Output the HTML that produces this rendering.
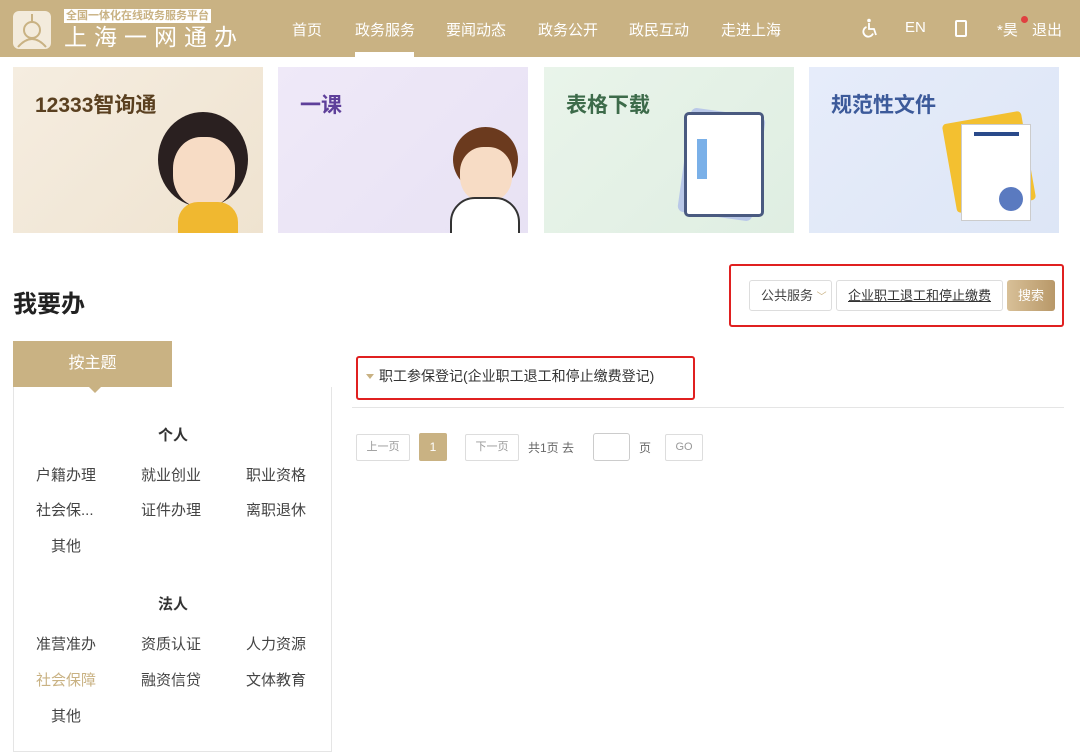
<!DOCTYPE html>
<html><head><meta charset="utf-8"><style>
*{margin:0;padding:0;box-sizing:border-box}
body{width:1080px;height:753px;overflow:hidden;background:#fff;font-family:"Liberation Sans","Noto Sans CJK SC",sans-serif;color:#333;position:relative}
.hd{position:absolute;left:0;top:0;width:1080px;height:57px;background:#c9b283}
.abs{position:absolute}
.nav{color:#fff;font-size:15px;top:19px}
.card{position:absolute;top:67px;width:250px;height:166px;overflow:hidden}
.card b{position:absolute;left:22px;top:22px;font-size:21px;font-weight:bold}
.side a{position:absolute;font-size:15px;color:#444}
</style></head><body>
<div class="hd">
 <div class="abs" style="left:13px;top:11px;width:38px;height:38px;background:#f3ebdc;border-radius:6px"></div>
 <svg class="abs" style="left:13px;top:11px" width="38" height="38"><circle cx="19" cy="19" r="8" fill="none" stroke="#c9b283" stroke-width="2"/><line x1="19" y1="3" x2="19" y2="11" stroke="#c9b283" stroke-width="2"/><path d="M5 36 Q19 20 33 36" fill="none" stroke="#c9b283" stroke-width="2"/></svg>
 <div class="abs" style="left:64px;top:9px;background:#fff;color:#c9b283;font-size:11px;font-weight:bold;padding:0 2px;line-height:14px">全国一体化在线政务服务平台</div>
 <div class="abs" style="left:64px;top:23px;color:#fff;font-size:23px;letter-spacing:7px;line-height:28px">上海一网通办</div>
 <div class="abs nav" style="left:292px">首页</div>
 <div class="abs nav" style="left:355px">政务服务</div>
 <div class="abs" style="left:355px;top:52px;width:59px;height:5px;background:#fff"></div>
 <div class="abs nav" style="left:446px">要闻动态</div>
 <div class="abs nav" style="left:538px">政务公开</div>
 <div class="abs nav" style="left:629px">政民互动</div>
 <div class="abs nav" style="left:721px">走进上海</div>
 <svg class="abs" style="left:862px;top:18px" width="16" height="20" viewBox="0 0 16 20"><circle cx="7" cy="2.5" r="1.8" fill="#fff"/><path d="M7 5 V11 H12 L14 17" fill="none" stroke="#fff" stroke-width="1.8"/><path d="M4.5 9 A5 5 0 1 0 11 15.5" fill="none" stroke="#fff" stroke-width="1.8"/></svg>
 <div class="abs nav" style="left:905px">EN</div>
 <div class="abs" style="left:955px;top:20px;width:12px;height:17px;border:2px solid #fff;border-radius:2px"></div>
 <div class="abs nav" style="left:997px">*昊</div>
 <div class="abs" style="left:1021px;top:16px;width:7px;height:7px;border-radius:50%;background:#e04040"></div>
 <div class="abs nav" style="left:1032px">退出</div>
</div>
<div class="card" style="left:13px;background:linear-gradient(135deg,#f5ede0,#efe3d0)"><b style="color:#5a4020">12333智询通</b>
 <div class="abs" style="left:145px;top:45px;width:90px;height:95px;border-radius:50%;background:#2a2020"></div>
 <div class="abs" style="left:160px;top:70px;width:62px;height:70px;border-radius:45%;background:#f7dcc5"></div>
 <div class="abs" style="left:165px;top:135px;width:60px;height:40px;border-radius:20px 20px 0 0;background:#f0b830"></div></div>
<div class="card" style="left:278px;background:linear-gradient(135deg,#efe9f8,#e8e2f4)"><b style="color:#5e3f9a">一课</b>
 <div class="abs" style="left:175px;top:60px;width:65px;height:65px;border-radius:50%;background:#6b3a1e"></div>
 <div class="abs" style="left:182px;top:80px;width:52px;height:55px;border-radius:45%;background:#f7dcc5"></div>
 <div class="abs" style="left:172px;top:130px;width:70px;height:40px;border-radius:25px 25px 0 0;background:#fff;border:2px solid #333"></div></div>
<div class="card" style="left:544px;background:linear-gradient(135deg,#e9f4ea,#dfeee2)"><b style="color:#3d6b4a">表格下载</b>
 <div class="abs" style="left:140px;top:45px;width:75px;height:105px;background:#b9c8e8;transform:rotate(8deg);border-radius:6px"></div>
 <div class="abs" style="left:140px;top:45px;width:80px;height:105px;background:#fff;border:3px solid #4a5a80;border-radius:5px"></div>
 <div class="abs" style="left:153px;top:72px;width:10px;height:40px;background:#7ab0e8"></div></div>
<div class="card" style="left:809px;background:linear-gradient(135deg,#e6ecfa,#dde6f6)"><b style="color:#3c5a9a">规范性文件</b>
 <div class="abs" style="left:140px;top:50px;width:80px;height:90px;background:#f3c030;transform:rotate(-10deg);border-radius:4px"></div>
 <div class="abs" style="left:152px;top:57px;width:70px;height:97px;background:#fff;border:1px solid #ccc"></div>
 <div class="abs" style="left:165px;top:65px;width:45px;height:4px;background:#2a4a8a"></div>
 <div class="abs" style="left:190px;top:120px;width:24px;height:24px;border-radius:50%;background:#5a7ac0"></div></div>

<div class="abs" style="left:13px;top:284px;font-size:24px;font-weight:bold;color:#222">我要办</div>
<div class="abs" style="left:729px;top:264px;width:335px;height:63px;border:2px solid #e02020;border-radius:3px"></div>
<div class="abs" style="left:749px;top:280px;width:83px;height:31px;border:1px solid #ddd;border-radius:3px;font-size:13px;line-height:29px;padding-left:11px;color:#444">公共服务 <span style="color:#c9b283;font-size:10px">﹀</span></div>
<div class="abs" style="left:836px;top:280px;width:167px;height:31px;border:1px solid #ddd;border-radius:3px;font-size:13px;line-height:29px;padding-left:11px;color:#333;text-decoration:underline">企业职工退工和停止缴费</div>
<div class="abs" style="left:1007px;top:280px;width:48px;height:31px;border-radius:3px;background:linear-gradient(90deg,#d8c098,#b89868);color:#fff;font-size:13px;line-height:31px;text-align:center">搜索</div>

<div class="abs" style="left:13px;top:341px;width:159px;height:46px;background:#c9b283;color:#fff;font-size:16px;line-height:46px;text-align:center">按主题</div>
<div class="abs" style="left:88px;top:386px;border:7px solid transparent;border-top-color:#c9b283;border-bottom:0"></div>
<div class="abs side" style="left:13px;top:387px;width:319px;height:365px;border:1px solid #e5e5e5;border-top:0">
 <div class="abs" style="left:144px;top:37px;font-size:15px;font-weight:bold">个人</div>
 <a style="left:22px;top:77px">户籍办理</a><a style="left:127px;top:77px">就业创业</a><a style="left:232px;top:77px">职业资格</a>
 <a style="left:22px;top:112px">社会保...</a><a style="left:127px;top:112px">证件办理</a><a style="left:232px;top:112px">离职退休</a>
 <a style="left:37px;top:148px">其他</a>
 <div class="abs" style="left:144px;top:206px;font-size:15px;font-weight:bold">法人</div>
 <a style="left:22px;top:246px">准营准办</a><a style="left:127px;top:246px">资质认证</a><a style="left:232px;top:246px">人力资源</a>
 <a style="left:22px;top:282px;color:#c9b283">社会保障</a><a style="left:127px;top:282px">融资信贷</a><a style="left:232px;top:282px">文体教育</a>
 <a style="left:37px;top:318px">其他</a>
</div>

<div class="abs" style="left:356px;top:356px;width:339px;height:44px;border:2px solid #e02020;border-radius:3px"></div>
<div class="abs" style="left:366px;top:374px;border:4px solid transparent;border-top:5px solid #c9b283;border-bottom:0"></div>
<div class="abs" style="left:379px;top:366px;font-size:14px;color:#333">职工参保登记(企业职工退工和停止缴费登记)</div>
<div class="abs" style="left:352px;top:407px;width:712px;height:1px;background:#e5e5e5"></div>

<div class="abs" style="left:356px;top:434px;width:54px;height:27px;border:1px solid #ddd;border-radius:2px;font-size:11px;color:#999;text-align:center;line-height:25px">上一页</div>
<div class="abs" style="left:419px;top:433px;width:28px;height:28px;background:#c9b283;border-radius:2px;color:#fff;font-size:12px;text-align:center;line-height:28px">1</div>
<div class="abs" style="left:465px;top:434px;width:54px;height:27px;border:1px solid #ddd;border-radius:2px;font-size:11px;color:#999;text-align:center;line-height:25px">下一页</div>
<div class="abs" style="left:528px;top:439px;font-size:12px;color:#666">共1页 去</div>
<div class="abs" style="left:593px;top:433px;width:37px;height:28px;border:1px solid #ccc;border-radius:3px"></div>
<div class="abs" style="left:639px;top:439px;font-size:12px;color:#666">页</div>
<div class="abs" style="left:665px;top:434px;width:38px;height:27px;border:1px solid #ddd;border-radius:2px;font-size:11px;color:#999;text-align:center;line-height:25px">GO</div>
</body></html>
